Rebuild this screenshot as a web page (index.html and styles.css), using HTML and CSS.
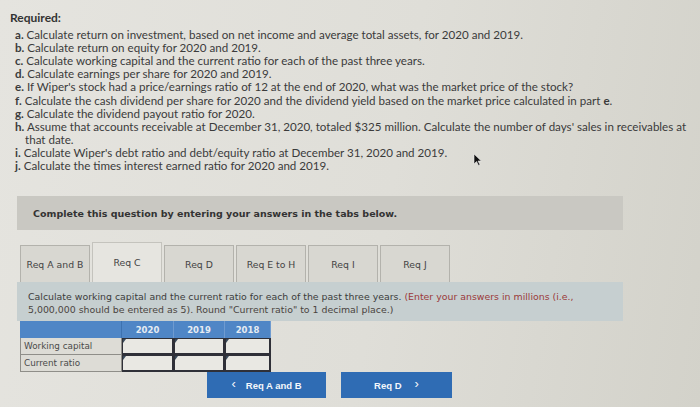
FILE: index.html
```html
<!DOCTYPE html>
<html>
<head>
<meta charset="utf-8">
<link rel="stylesheet" href="styles.css">
</head>
<body>
<div class="page">
  <div class="required">
    <div class="req-title">Required:</div>
    <div class="item"><b>a.</b> Calculate return on investment, based on net income and average total assets, for 2020 and 2019.</div>
    <div class="item"><b>b.</b> Calculate return on equity for 2020 and 2019.</div>
    <div class="item"><b>c.</b> Calculate working capital and the current ratio for each of the past three years.</div>
    <div class="item"><b>d.</b> Calculate earnings per share for 2020 and 2019.</div>
    <div class="item"><b>e.</b> If Wiper's stock had a price/earnings ratio of 12 at the end of 2020, what was the market price of the stock?</div>
    <div class="item"><b>f.</b> Calculate the cash dividend per share for 2020 and the dividend yield based on the market price calculated in part <b>e</b>.</div>
    <div class="item"><b>g.</b> Calculate the dividend payout ratio for 2020.</div>
    <div class="item"><b>h.</b> Assume that accounts receivable at December 31, 2020, totaled $325 million. Calculate the number of days' sales in receivables at that date.</div>
    <div class="item"><b>i.</b> Calculate Wiper's debt ratio and debt/equity ratio at December 31, 2020 and 2019.</div>
    <div class="item"><b>j.</b> Calculate the times interest earned ratio for 2020 and 2019.</div>
  </div>

  <div class="instruction">Complete this question by entering your answers in the tabs below.</div>

  <div class="tabs">
    <div class="tab">Req A and B</div>
    <div class="tab active">Req C</div>
    <div class="tab">Req D</div>
    <div class="tab">Req E to H</div>
    <div class="tab">Req I</div>
    <div class="tab">Req J</div>
  </div>

  <div class="prompt">
    <div class="pline">Calculate working capital and the current ratio for each of the past three years. <span class="red">(Enter your answers in millions (i.e.,</span></div>
    <div class="pline note">5,000,000 should be entered as 5). Round "Current ratio" to 1 decimal place.)</div>
  </div>

  <div class="grid">
    <div class="hd first"></div>
    <div class="hd">2020</div>
    <div class="hd">2019</div>
    <div class="hd">2018</div>
    <div class="label">Working capital</div>
    <div class="cell"></div>
    <div class="cell"></div>
    <div class="cell"></div>
    <div class="label">Current ratio</div>
    <div class="cell"></div>
    <div class="cell"></div>
    <div class="cell"></div>
  </div>

  <div class="buttons">
    <div class="btn prev"><span class="chev">&lsaquo;</span>Req A and B</div>
    <div class="btn next">Req D<span class="chev">&rsaquo;</span></div>
  </div>

  <svg class="cursor" width="9" height="13" viewBox="0 0 9 13"><path d="M1 1 L1 11 L3.5 8.5 L5.5 12.5 L7 11.8 L5 8 L8.3 8 Z" fill="#111" stroke="#eee" stroke-width="0.6"/></svg>
</div>
</body>
</html>
```
FILE: styles.css
```css
html, body {
  margin: 0;
  padding: 0;
}
body {
  width: 700px;
  height: 407px;
  overflow: hidden;
  background: linear-gradient(100deg, #e5e4df 0%, #dfded8 55%, #d3d2ca 100%);
}
.page {
  position: relative;
  width: 700px;
  height: 407px;
  box-sizing: border-box;
  padding-top: 11px;
  font-family: Lato, "Liberation Sans", sans-serif;
  color: #3b3b3b;
}
.required {
  padding-left: 10px;
  font-size: 11.6px;
  line-height: 13.1px;
}
.req-title {
  font-weight: bold;
  font-size: 12px;
  margin-bottom: 4px;
  color: #333;
}
.item {
  padding-left: 15px;
  text-indent: -10px;
  padding-right: 4px;
}
.item b {
  font-weight: bold;
}
.instruction {
  margin: 24px 0 0 17px;
  width: 606px;
  height: 34px;
  box-sizing: border-box;
  padding-left: 16px;
  display: flex;
  align-items: center;
  background: #c9c8c2;
  font-family: "DejaVu Sans", Verdana, sans-serif;
  font-weight: bold;
  font-size: 9.5px;
  color: #333;
}
.tabs {
  display: flex;
  gap: 2px;
  margin: 12px 0 0 20px;
  height: 40px;
  align-items: flex-end;
}
.tab {
  width: 70px;
  height: 37px;
  box-sizing: border-box;
  border: 1px solid #b3b2ac;
  border-bottom: none;
  background: #d8d7d1;
  display: flex;
  align-items: center;
  justify-content: center;
  font-family: "DejaVu Sans", Verdana, sans-serif;
  font-size: 9.3px;
  color: #444;
}
.tab.active {
  height: 40px;
  background: #e6e5e0;
  border-color: #c4c3bd;
}
.prompt {
  margin-left: 17px;
  width: 606px;
  height: 39px;
  box-sizing: border-box;
  padding: 8px 10px 0 11px;
  background: #c6cfd0;
  font-family: "DejaVu Sans", Verdana, sans-serif;
  font-size: 9.4px;
  line-height: 13px;
  color: #3c3c3c;
}
.pline {
  white-space: nowrap;
}
.red {
  color: #9b3a3a;
}
.note {
  color: #4a4440;
}
.grid {
  display: grid;
  grid-template-columns: 102px 52px 51px 46px;
  grid-template-rows: 17px 17px 17px;
  margin-left: 20px;
  width: 251px;
}
.hd {
  background: #4f86c6;
  border-right: 1px solid #6f9bd0;
  color: #e6ecf3;
  font-family: "DejaVu Sans", Verdana, sans-serif;
  font-weight: bold;
  font-size: 8.5px;
  display: flex;
  align-items: center;
  justify-content: center;
}
.hd.first {
  border-right: 1px solid #3d72b0;
}
.label {
  border: 1px solid #8f8e89;
  border-top: none;
  background: #dddcd6;
  font-family: "DejaVu Sans", Verdana, sans-serif;
  font-size: 8.8px;
  color: #4a4a4a;
  padding-left: 3px;
  display: flex;
  align-items: center;
}
.cell {
  position: relative;
  border: 2px solid #2f3038;
  border-top-width: 1px;
  border-left-width: 1px;
  background: #e9e8e3;
}
.cell::before {
  content: "";
  position: absolute;
  left: 0;
  top: 0;
  border-top: 4px solid #3a4a5a;
  border-right: 3px solid transparent;
}
.buttons {
  display: flex;
  gap: 15px;
  margin: 0 0 0 207px;
}
.btn {
  height: 26px;
  background: #2f6cb4;
  color: #f4f7fb;
  font-family: "Liberation Sans", Arial, sans-serif;
  font-weight: bold;
  font-size: 9.5px;
  display: flex;
  align-items: center;
  justify-content: center;
  box-sizing: border-box;
}
.btn.prev {
  width: 119px;
}
.btn.next {
  width: 111px;
}
.chev {
  font-weight: normal;
  font-size: 13px;
  line-height: 10px;
  position: relative;
  top: -1px;
}
.prev .chev {
  margin-right: 10px;
}
.next .chev {
  margin-left: 13px;
}
.cursor {
  position: absolute;
  left: 473px;
  top: 153px;
}
```
